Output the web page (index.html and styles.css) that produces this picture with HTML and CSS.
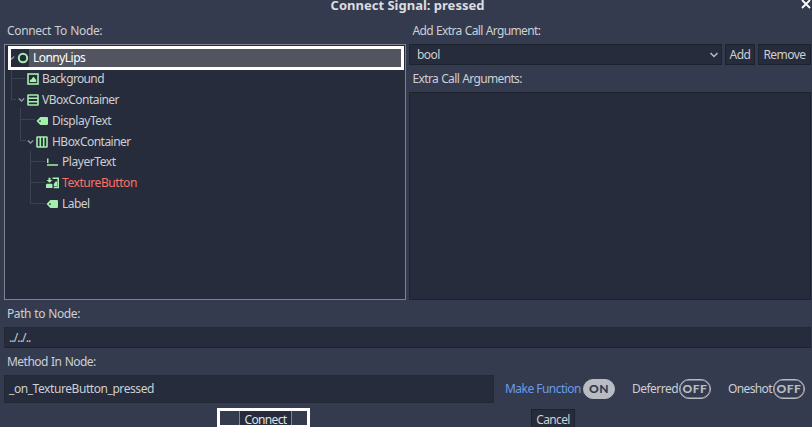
FILE: index.html
```html
<!DOCTYPE html>
<html lang="en">
<head>
<meta charset="utf-8">
<title>Connect Signal</title>
<link rel="stylesheet" href="styles.css">
</head>
<body>
<div class="dialog">
  <header class="title"><span class="t">Connect Signal: pressed</span>
    <svg class="close" width="10" height="10" viewBox="0 0 10 10"><path d="M1 0L9 8M9 0L1 8" stroke="#fff" stroke-width="1.800" fill="none"/></svg>
  </header>
  <div class="columns">
    <section class="left">
      <div class="label ls3">Connect To Node:</div>
      <div class="tree">
        <svg class="guides" width="60" height="170" viewBox="0 0 60 170"><path d="M7.500 24V55.500H12M7.500 34.500H21M16.500 64V96.500H22M17 75.500H31M26.500 107V159.500H41M26.500 117.500H41M26.500 138.500H41" stroke="#3b4250" fill="none"/></svg>
        <div class="row d0 selected"><svg class="chev" width="7" height="6" viewBox="0 0 7 6"><path d="M.8 1.500L3.500 4L6.200 1.500"/></svg><svg class="icon" width="12" height="12" viewBox="0 0 12 12"><circle cx="6" cy="6" r="4.200" class="s"/></svg><span class="name ls5">LonnyLips</span></div>
        <div class="row d1"><svg class="icon" width="12" height="12" viewBox="0 0 12 12"><rect x="1" y="1" width="10" height="10" class="l"/><path d="M2.800 9V7.500L4 6.200H5V5.200L6.500 3.700L8 5.200V6.200H9.200V9Z"/></svg><span class="name ls6">Background</span></div>
        <div class="row d1"><svg class="chev" width="7" height="6" viewBox="0 0 7 6"><path d="M.8 1.500L3.500 4L6.200 1.500"/></svg><svg class="icon" width="12" height="12" viewBox="0 0 12 12"><rect x="1" y="1" width="10" height="10" rx=".5" class="l"/><path d="M1 4.300H11M1 7.700H11" class="l"/></svg><span class="name ls5">VBoxContainer</span></div>
        <div class="row d2"><svg class="icon" width="12" height="12" viewBox="0 0 12 12"><path fill-rule="evenodd" d="M4.300 2H11Q12 2 12 3V9Q12 10 11 10H4.300L.5 6ZM4 5.200A.9.900 0 1 0 4 7A.9.900 0 1 0 4 5.200Z"/></svg><span class="name ls4">DisplayText</span></div>
        <div class="row d2"><svg class="chev" width="7" height="6" viewBox="0 0 7 6"><path d="M.8 1.500L3.500 4L6.200 1.500"/></svg><svg class="icon" width="12" height="12" viewBox="0 0 12 12"><rect x="1" y="1" width="10" height="10" rx=".5" class="l"/><path d="M4.300 1V11M7.700 1V11" class="l"/></svg><span class="name ls5">HBoxContainer</span></div>
        <div class="row d3"><svg class="icon" width="12" height="12" viewBox="0 0 12 12"><path d="M1 2.500H2.500V7H1ZM1 8.200H12V9.800H1Z"/></svg><span class="name ls4">PlayerText</span></div>
        <div class="row d3 wide"><svg class="icon" width="13" height="12" viewBox="0 0 13 12"><path d="M2.500 .8H4.500V3H6.500L3.500 5.800L.5 3H2.500ZM0 11V8Q0 6.800 1.200 6.800H5.300Q6.500 6.800 6.500 8V11Z"/><path d="M6.500 1.250H12.200V10.500H7.800" class="l"/><path d="M7.800 9.200V7L9.500 4.500H11V9.200Z"/></svg><span class="name ls4 red">TextureButton</span></div>
        <div class="row d3"><svg class="icon" width="12" height="12" viewBox="0 0 12 12"><path fill-rule="evenodd" d="M4.300 2H11Q12 2 12 3V9Q12 10 11 10H4.300L.5 6ZM4 5.200A.9.900 0 1 0 4 7A.9.900 0 1 0 4 5.200Z"/></svg><span class="name ls5">Label</span></div>
        <div class="mark"></div>
      </div>
    </section>
    <section class="right">
      <div class="label ls6">Add Extra Call Argument:</div>
      <div class="args">
        <div class="box select ls5"><span>bool</span><svg width="10" height="8" viewBox="0 0 10 8"><path d="M1.500 2L5 5.500L8.500 2" fill="none" stroke="#b9bcc3" stroke-width="1.500"/></svg></div>
        <div class="box add ls4">Add</div>
        <div class="box remove ls5">Remove</div>
      </div>
      <div class="label second ls6">Extra Call Arguments:</div>
      <div class="box list"></div>
    </section>
  </div>
  <div class="label path-label ls4">Path to Node:</div>
  <div class="box field path">../../..</div>
  <div class="label method-label ls5">Method In Node:</div>
  <div class="method-row">
    <div class="box field method ls4">_on_TextureButton_pressed</div>
    <div class="toggle make"><span class="w1 ls5">Make Function</span><b class="pill on">ON</b></div>
    <div class="toggle def"><span class="w2 ls5">Deferred</span><b class="pill">OFF</b></div>
    <div class="toggle one"><span class="w3 ls6">Oneshot</span><b class="pill">OFF</b></div>
  </div>
  <footer class="actions">
    <div class="connect-mark"><div class="connect ls6">Connect</div></div>
    <div class="box cancel ls6">Cancel</div>
  </footer>
</div>
</body>
</html>
```
FILE: styles.css
```css
* { box-sizing: border-box; }
body { margin: 0; background: #343b4f; color: #cdcfd3; font: 12px/16px "Noto Sans", sans-serif; overflow: hidden; }
svg { display: block; flex: none; }
.ls3 { letter-spacing: -.35px; }
.ls4 { letter-spacing: -.43px; }
.ls5 { letter-spacing: -.53px; }
.ls6 { letter-spacing: -.64px; }
.dialog { width: 812px; height: 427px; overflow: hidden; padding: 0 1px 0 4px; white-space: nowrap; display: flex; flex-direction: column; }
.title { height: 16px; flex: none; position: relative; text-align: center; font-weight: 700; font-size: 13px; line-height: 10px; color: #dcdde0; }
.close { position: absolute; right: 0; top: 0; }
.columns { display: flex; gap: 3px; height: 284px; flex: none; }
.left { width: 402px; }
.right { width: 402px; }
.label { height: 28px; padding-left: 3px; line-height: 29px; word-spacing: .6px; }
.right .label { padding-left: 3.5px; }
.tree { position: relative; height: 256px; border: 1px solid #7d8390; background: #262c3b; padding: 3px 2px; }
.guides { position: absolute; left: -1px; top: -1px; }
.row { position: relative; height: 20.8px; display: flex; align-items: center; }
.d0 { padding-left: 10px; }
.d1 { padding-left: 20px; }
.d2 { padding-left: 29px; }
.d3 { padding-left: 39px; }
.chev { position: absolute; margin-left: -9px; fill: none; stroke: #9297a1; stroke-width: 1.3; }
.icon { fill: #a5efac; }
.icon .l, .icon .s { fill: none; stroke: #a5efac; stroke-width: 1.6; }
.icon .s { stroke-width: 2; }
.name { margin-left: 3px; }
.d2 .name, .d3 .name { margin-left: 4px; }
.wide .name { margin-left: 3px; }
.selected .name { flex: 1; height: 20px; line-height: 20px; background: #525560; color: #fff; margin-left: 0; padding-left: 4px; }
.red { color: #fc7266; }
.mark { position: absolute; left: 3px; top: 1px; width: 396px; height: 24px; border: 3px solid #fff; }
.box { background: #262c3b; border: 1px solid #1c222e; }
.args { display: flex; gap: 3px; height: 21px; line-height: 19px; }
.select { width: 313px; padding: 0 2px 0 7px; display: flex; justify-content: space-between; align-items: center; }
.add { width: 30px; text-align: center; }
.remove { width: 53px; text-align: center; }
.second { height: 27px; line-height: 27px; }
.list { height: 208px; }
.path-label { height: 27px; line-height: 27px; flex: none; }
.field { padding-left: 4px; border-color: #242937; }
.path { height: 21px; line-height: 20px; flex: none; border-bottom-color: #1c222e; letter-spacing: -.85px; }
.method-label { height: 27px; flex: none; line-height: 28px; }
.method-row { display: flex; height: 28px; flex: none; align-items: center; }
.method { width: 490px; height: 28px; line-height: 26px; }
.toggle { display: flex; align-items: center; }
.make { color: #699ce8; margin-left: 11px; }
.def { margin-left: 17px; }
.one { margin-left: 17px; }
.w1 { width: 78px; }
.w2 { width: 47px; }
.w3 { width: 45px; }
.pill { width: 32px; height: 20px; border: 1.5px solid #b9bcc3; box-shadow: inset 0 0 0 .5px #b9bcc3; border-radius: 10px; text-align: center; font: 900 12px/18px Lato, sans-serif; letter-spacing: .5px; color: #b9bcc3; }
.on { background: #b9bcc3; color: #343b4f; }
.actions { display: flex; flex: none; margin-top: 5px; align-items: flex-start; }
.connect-mark { width: 93px; height: 20px; margin-left: 213px; border: 3px solid #fff; display: flex; justify-content: center; }
.connect { width: 53px; margin-left: 4px; text-align: center; border: solid #7d8390; border-width: 0 1px; background: #262c3b; height: 14px; line-height: 17px; color: #e0e1e4; }
.cancel { width: 44px; height: 22px; margin: 1px 0 0 221px; text-align: center; line-height: 19px; }
```
